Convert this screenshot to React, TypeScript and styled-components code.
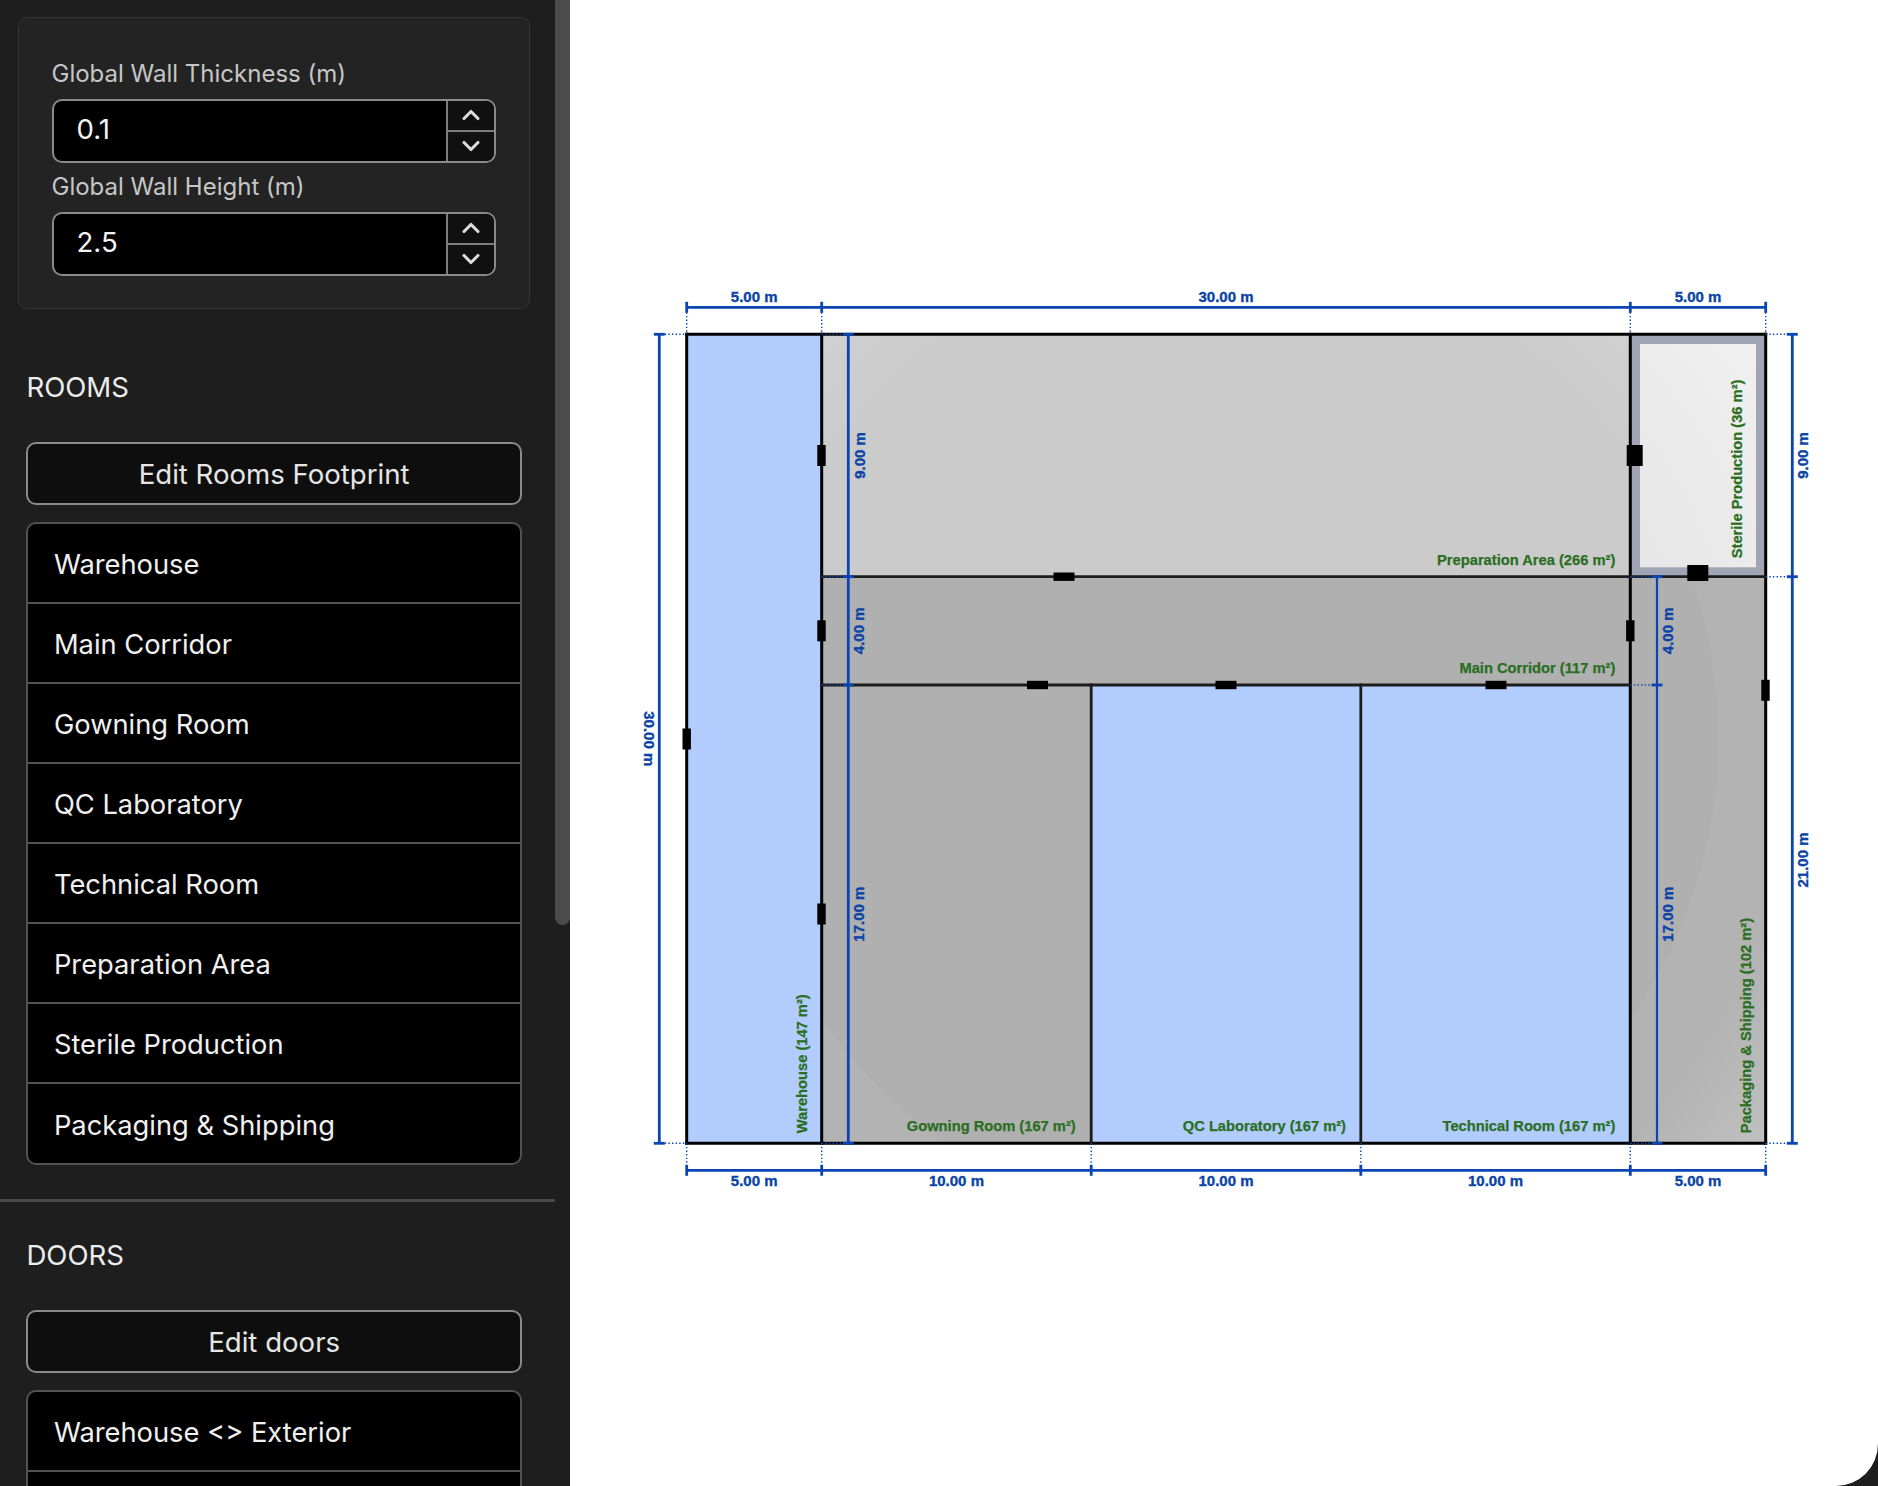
import styled, {createGlobalStyle} from "styled-components";
import {ChevronDown, ChevronUp} from "lucide-react";

const GlobalStyle = createGlobalStyle`
    html, body {
        margin: 0;
        padding: 0;
        background: #1e1e1e;
    }
    * {
        box-sizing: border-box;
    }
`;

const Page = styled.div`
    display: flex;
    width: 1878px;
    height: 1486px;
    overflow: hidden;
    background: #1e1e1e;
    font-family: Inter, "Liberation Sans", sans-serif;
`;

const Sidebar = styled.aside`
    display: flex;
    flex: none;
    width: 570px;
    height: 100%;
    overflow: hidden;
`;

const SidebarContent = styled.div`
    flex: none;
    width: 555px;
`;

const ScrollTrack = styled.div`
    flex: none;
    width: 15px;
`;

const ScrollThumb = styled.div`
    height: 925px;
    background: #4b4b4b;
    border-radius: 0 0 8px 8px;
`;

const WallPanel = styled.section`
    display: flex;
    flex-direction: column;
    width: 512px;
    height: 292px;
    margin: 17px 0 0 18px;
    padding: 41px 33.5px 0 32.5px;
    background: #232323;
    border: 1px dotted #4a4a4a;
    border-radius: 10px;
`;

const FieldLabel = styled.label`
    height: 29px;
    margin-bottom: 11px;
    color: #c6c6c6;
    font-size: 24px;
    line-height: 29px;
`;

const NumberField = styled.div`
    display: flex;
    flex: none;
    height: 63.5px;
    margin-bottom: 9.5px;
    background: #000;
    border: 2px solid #8a8a8a;
    border-radius: 10px;
    overflow: hidden;
`;

const NumberInput = styled.input`
    flex: 1;
    min-width: 0;
    padding: 0 0 3px 23px;
    background: transparent;
    border: none;
    outline: none;
    color: #f4f4f4;
    font-family: inherit;
    font-size: 27.6px;
`;

const Stepper = styled.div`
    display: flex;
    flex: none;
    flex-direction: column;
    width: 48px;
    background: #101010;
    border-left: 2px solid #7c7c7c;
`;

const StepButton = styled.div<{$first?: boolean}>`
    display: flex;
    flex: 1;
    align-items: center;
    justify-content: center;
    color: #dcdcdc;
    border-bottom: ${(p) => (p.$first ? "2px solid #7c7c7c" : "none")};
`;

const Section = styled.section<{$top: number}>`
    width: 495.5px;
    margin: ${(p) => p.$top}px 0 0 26.4px;
`;

const SectionTitle = styled.h2`
    height: 32px;
    margin: 0 0 39px;
    color: #ececec;
    font-size: 27.6px;
    font-weight: 400;
    line-height: 32px;
`;

const EditButton = styled.button`
    display: block;
    width: 100%;
    height: 63px;
    margin-bottom: 17px;
    padding: 0;
    background: #0e0e0e;
    border: 2px solid #8a8a8a;
    border-radius: 10px;
    color: #e6e6e6;
    font-family: inherit;
    font-size: 27.6px;
`;

const ItemList = styled.ul`
    margin: 0;
    padding: 0;
    list-style: none;
    background: #000;
    border: 2px solid #525252;
    border-radius: 10px;
`;

const Item = styled.li`
    display: flex;
    align-items: center;
    height: 80px;
    padding: 3px 0 0 25.5px;
    color: #f0f0f0;
    font-size: 27.3px;
    border-bottom: 2px solid #525252;

    &:last-child {
        height: 79px;
        border-bottom: none;
    }
`;

const Rule = styled.hr`
    height: 3px;
    margin: 33.5px 0 0;
    background: #4b4b4b;
    border: none;
    border-radius: 0 2px 2px 0;
`;

const Canvas = styled.main`
    flex: 1;
    height: 100%;
    background: #fff;
    border-bottom-right-radius: 42px;
    overflow: hidden;
`;

const Drawing = styled.svg`
    display: block;
    width: 100%;
    height: 100%;
`;

const DimLine = styled.line<{$w?: number}>`
    stroke: #0b45b2;
    stroke-width: ${(p) => p.$w ?? 2.8}px;
`;

const DimDots = styled.line`
    stroke: #0b45b2;
    stroke-width: 1.4px;
    stroke-dasharray: 1.4 2.2;
`;

const DimLabel = styled.text`
    fill: #0b44a6;
    stroke: #0b44a6;
    stroke-width: 0.35px;
    font-family: "Liberation Sans", Arial, sans-serif;
    font-size: 15px;
    font-weight: 700;
    text-anchor: middle;
    dominant-baseline: central;
`;

const RoomLabel = styled.text<{$anchor?: string}>`
    fill: #2a6e1f;
    stroke: #2a6e1f;
    stroke-width: 0.25px;
    font-family: "Liberation Sans", Arial, sans-serif;
    font-size: 14.7px;
    font-weight: 700;
    text-anchor: ${(p) => p.$anchor ?? "end"};
    dominant-baseline: central;
`;

const Wall = styled.line<{$soft?: boolean}>`
    stroke: ${(p) => (p.$soft ? "#1c1c1c" : "#000")};
    stroke-width: ${(p) => (p.$soft ? 2.8 : 3)}px;
    stroke-linecap: square;
`;

const rooms = [
    "Warehouse",
    "Main Corridor",
    "Gowning Room",
    "QC Laboratory",
    "Technical Room",
    "Preparation Area",
    "Sterile Production",
    "Packaging & Shipping",
];

const X0 = 686.7;
const X1 = 821.7;
const X2 = 1091.2;
const X3 = 1360.8;
const X4 = 1630.3;
const X5 = 1765.7;
const Y0 = 334.3;
const Y1 = 576.7;
const Y2 = 685;
const Y3 = 1143.3;

const doors = [
    [817.3, 445, 8.4, 21],
    [817.3, 620.3, 8.4, 21],
    [817.3, 903.5, 8.4, 21],
    [682.5, 728.5, 8.4, 21],
    [1053.5, 572.5, 21, 8.4],
    [1027, 680.8, 21, 8.4],
    [1215.5, 680.8, 21, 8.4],
    [1485.5, 680.8, 21, 8.4],
    [1626.7, 445, 16, 21],
    [1687.3, 565, 21, 16],
    [1626.1, 620.3, 8.4, 21],
    [1761.3, 679.8, 8.4, 21],
];

function HorizontalDim({y, xs, labels, labelY}: {y: number; xs: number[]; labels: string[]; labelY: number}) {
    const from = y < Y0 ? y + 5 : Y3;
    const to = y < Y0 ? Y0 : y - 5;
    return (
        <g>
            <DimLine x1={xs[0]} x2={xs[xs.length - 1]} y1={y} y2={y} />
            {xs.map((x) => (
                <g key={x}>
                    <DimLine x1={x} x2={x} y1={y - 5.5} y2={y + 5.5} />
                    <DimDots x1={x} x2={x} y1={from} y2={to} />
                </g>
            ))}
            {labels.map((label, i) => (
                <DimLabel key={i} x={(xs[i] + xs[i + 1]) / 2} y={labelY}>{label}</DimLabel>
            ))}
        </g>
    );
}

function VerticalDim({x, ys, wallX, labels, labelX, w}: {x: number; ys: number[]; wallX: number; labels: string[]; labelX: number; w?: number}) {
    const from = wallX < x ? wallX : x + 5.5;
    const to = wallX < x ? x - 5.5 : wallX;
    return (
        <g>
            <DimLine $w={w} x1={x} x2={x} y1={ys[0]} y2={ys[ys.length - 1]} />
            {ys.map((y) => (
                <g key={y}>
                    <DimLine x1={x - 5.5} x2={x + 5.5} y1={y} y2={y} />
                    <DimDots x1={from} x2={to} y1={y} y2={y} />
                </g>
            ))}
            {labels.map((label, i) => {
                const mid = (ys[i] + ys[i + 1]) / 2;
                return <DimLabel key={i} x={labelX} y={mid} transform={`rotate(-90 ${labelX} ${mid})`}>{label}</DimLabel>;
            })}
        </g>
    );
}

function FloorPlan() {
    return (
        <Drawing viewBox="570 0 1308 1486">
            <defs>
                <radialGradient id="prep" gradientUnits="userSpaceOnUse" cx="1226" cy="738" r="675">
                    <stop offset="0.7" stopColor="#cbcbcb" />
                    <stop offset="0.82" stopColor="#cfcfcf" />
                    <stop offset="1" stopColor="#d6d6d6" />
                </radialGradient>
                <radialGradient id="grey" gradientUnits="userSpaceOnUse" cx="1226" cy="738" r="675">
                    <stop offset="0.729" stopColor="#b0b0b0" />
                    <stop offset="0.73" stopColor="#b3b3b3" />
                    <stop offset="0.84" stopColor="#b3b3b3" />
                    <stop offset="1" stopColor="#c0c0c0" />
                </radialGradient>
                <radialGradient id="sterile" gradientUnits="userSpaceOnUse" cx="1226" cy="738" r="675">
                    <stop offset="0.7" stopColor="#e7e7e7" />
                    <stop offset="1" stopColor="#f1f1f1" />
                </radialGradient>
            </defs>

            <rect x={X0} y={Y0} width={X1 - X0} height={Y3 - Y0} fill="#b1ccfd" />
            <rect x={X1} y={Y0} width={X4 - X1} height={Y1 - Y0} fill="url(#prep)" />
            <rect x={X1} y={Y1} width={X4 - X1} height={Y2 - Y1} fill="url(#grey)" />
            <rect x={X1} y={Y2} width={X2 - X1} height={Y3 - Y2} fill="url(#grey)" />
            <rect x={X2} y={Y2} width={X4 - X2} height={Y3 - Y2} fill="#b1ccfd" />
            <rect x={X4} y={Y1} width={X5 - X4} height={Y3 - Y1} fill="url(#grey)" />
            <rect x={X4} y={Y0} width={X5 - X4} height={Y1 - Y0} fill="#a1a4b5" />
            <rect x={1640} y={344} width={116} height={223.3} fill="url(#sterile)" />

            <Wall x1={X0} x2={X5} y1={Y0} y2={Y0} />
            <Wall x1={X0} x2={X5} y1={Y3} y2={Y3} />
            <Wall x1={X0} x2={X0} y1={Y0} y2={Y3} />
            <Wall x1={X5} x2={X5} y1={Y0} y2={Y3} />
            <Wall x1={X1} x2={X1} y1={Y0} y2={Y3} />
            <Wall x1={X4} x2={X4} y1={Y0} y2={Y3} />
            <Wall $soft x1={X1} x2={X5} y1={Y1} y2={Y1} />
            <Wall $soft x1={X1} x2={X4} y1={Y2} y2={Y2} />
            <Wall $soft x1={X2} x2={X2} y1={Y2} y2={Y3} />
            <Wall $soft x1={X3} x2={X3} y1={Y2} y2={Y3} />

            {doors.map(([x, y, w, h]) => (
                <rect key={`${x}-${y}`} x={x} y={y} width={w} height={h} fill="#000" />
            ))}

            <HorizontalDim
                y={307.3}
                labelY={296}
                xs={[X0, X1, X4, X5]}
                labels={["5.00 m", "30.00 m", "5.00 m"]}
            />
            <HorizontalDim
                y={1170.3}
                labelY={1180.3}
                xs={[X0, X1, X2, X3, X4, X5]}
                labels={["5.00 m", "10.00 m", "10.00 m", "10.00 m", "5.00 m"]}
            />
            <VerticalDim x={659.3} ys={[Y0, Y3]} wallX={X0} labels={[]} labelX={649} />
            <DimLabel x={649} y={738.8} transform="rotate(90 649 738.8)">30.00 m</DimLabel>
            <VerticalDim x={848.3} ys={[Y0, Y1, Y2, Y3]} wallX={X1} labels={["9.00 m", "4.00 m", "17.00 m"]} labelX={859} />
            <VerticalDim x={1657} ys={[Y1, Y2, Y3]} wallX={X4} labels={["4.00 m", "17.00 m"]} labelX={1668} w={2.2} />
            <VerticalDim x={1792.3} ys={[Y0, Y1, Y3]} wallX={X5} labels={["9.00 m", "21.00 m"]} labelX={1802.7} />

            <RoomLabel x={1615.3} y={559.5}>Preparation Area (266 m²)</RoomLabel>
            <RoomLabel x={1615.3} y={667.5}>Main Corridor (117 m²)</RoomLabel>
            <RoomLabel x={1075.7} y={1126.2}>Gowning Room (167 m²)</RoomLabel>
            <RoomLabel x={1346} y={1126.2}>QC Laboratory (167 m²)</RoomLabel>
            <RoomLabel x={1615.3} y={1126.2}>Technical Room (167 m²)</RoomLabel>
            <RoomLabel $anchor="start" x={801.7} y={1133.3} transform="rotate(-90 801.7 1133.3)">Warehouse (147 m²)</RoomLabel>
            <RoomLabel $anchor="start" x={1737.3} y={558.3} transform="rotate(-90 1737.3 558.3)">Sterile Production (36 m²)</RoomLabel>
            <RoomLabel $anchor="start" x={1746} y={1133.3} transform="rotate(-90 1746 1133.3)">Packaging &amp; Shipping (102 m²)</RoomLabel>
        </Drawing>
    );
}

function WallField({label, value}: {label: string; value: string}) {
    return (
        <>
            <FieldLabel>{label}</FieldLabel>
            <NumberField>
                <NumberInput defaultValue={value} />
                <Stepper>
                    <StepButton $first><ChevronUp size={28} strokeWidth={2.7} /></StepButton>
                    <StepButton><ChevronDown size={28} strokeWidth={2.7} /></StepButton>
                </Stepper>
            </NumberField>
        </>
    );
}

export default function App() {
    return (
        <Page>
            <GlobalStyle />
            <Sidebar>
                <SidebarContent>
                    <WallPanel>
                        <WallField label="Global Wall Thickness (m)" value="0.1" />
                        <WallField label="Global Wall Height (m)" value="2.5" />
                    </WallPanel>
                    <Section $top={62}>
                        <SectionTitle>ROOMS</SectionTitle>
                        <EditButton>Edit Rooms Footprint</EditButton>
                        <ItemList>
                            {rooms.map((room) => (
                                <Item key={room}>{room}</Item>
                            ))}
                        </ItemList>
                    </Section>
                    <Rule />
                    <Section $top={37.5}>
                        <SectionTitle>DOORS</SectionTitle>
                        <EditButton>Edit doors</EditButton>
                        <ItemList>
                            <Item>Warehouse &lt;&gt; Exterior</Item>
                            <Item />
                        </ItemList>
                    </Section>
                </SidebarContent>
                <ScrollTrack>
                    <ScrollThumb />
                </ScrollTrack>
            </Sidebar>
            <Canvas>
                <FloorPlan />
            </Canvas>
        </Page>
    );
}
